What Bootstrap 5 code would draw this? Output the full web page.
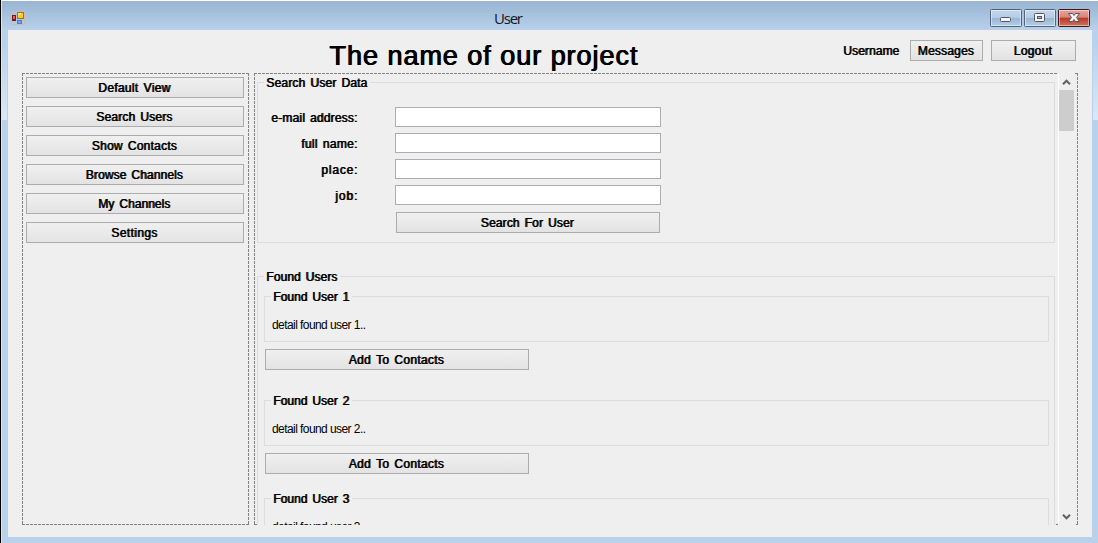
<!DOCTYPE html>
<html lang="en">
<head>
<meta charset="utf-8">
<meta name="viewport" content="width=device-width, initial-scale=1">
<title>User</title>
<link rel="stylesheet" href="https://cdn.jsdelivr.net/npm/bootstrap@5.3.0/dist/css/bootstrap.min.css">
<style>
  body { background:#b9d1ea; font:12px/14px "Liberation Sans", sans-serif; color:#000; }
  .win { width:1098px; height:543px; border-left:1px solid #000; padding:0 6px 6px 7px;
    background:
      linear-gradient(#fff,#fff) 0 0/100% 1px no-repeat,
      linear-gradient(#98b4d2,#b9d1ea) 0 1px/100% 29px no-repeat,
      linear-gradient(#b9d1ea,#b9d1ea 15%,#dce8f5) 1px 30px/5px 90px no-repeat,
      linear-gradient(#b9d1ea,#b9d1ea 15%,#dce8f5) 1092px 30px/5px 90px no-repeat,
      #b9d1ea; box-shadow:inset 1px 0 #d9e6f3; }
  .titlebar { height:30px; padding:10px 0 0 3px; }
  .caption-text { font:15px/20px "Open Sans", sans-serif; color:#111827; left:486px; top:8px; }
  .window-buttons { left:982px; top:9px; }
  .client { height:507px; background:#efefef; padding:0 14px 12px; }
  .topbar { height:43px; }
  .fb { text-shadow:.8px 0 0 #000; white-space:nowrap; word-spacing:1.5px; }
  .fit { display:inline-block; white-space:nowrap; }
  .heading-text { font-size:27px; line-height:30px; margin:11px 0 0 307px; word-spacing:0; text-shadow:.5px 0 0 #000,1px 0 0 #000; }
  .account { margin:10px 2px 0 0; }
  .user-label { margin:4px 11px 0 0; }
  .wbtn { height:21px; border:1px solid #acacac; border-radius:0; padding:1px 2px 0 0; background:linear-gradient(#f0f0f0,#e3e3e3);
    font-size:12px; line-height:18px; color:#000; }
  .wbtn .fit { line-height:18px; vertical-align:top; }
  .w-messages { width:73px; margin-right:8px; }
  .w-logout { width:85px; }
  .dash { --h:repeating-linear-gradient(90deg,#828282 0 3px,transparent 3px 4px);
          --v:repeating-linear-gradient(#828282 0 3px,transparent 3px 4px); }
  .side { width:227px; height:452px; padding:4px 5px 0 4px; gap:8px;
    background:var(--h) 0 0/100% 1px no-repeat,var(--h) 0 100%/100% 1px no-repeat,
               var(--v) 0 0/1px 100% no-repeat,var(--v) 100% 0/1px 100% no-repeat; }
  .pane { width:824px; height:452px; margin-left:5px; padding-left:3px;
    background:var(--h) 0 0/804px 1px no-repeat,var(--h) 821px 0/3px 1px no-repeat,
               var(--h) 0 100%/3px 1px no-repeat,linear-gradient(#828282,#828282) 802px 100%/2px 1px no-repeat,
               linear-gradient(#828282,#828282) 822px 100%/2px 1px no-repeat,
               var(--v) 0 0/1px 100% no-repeat,var(--v) 100% 0/1px 100% no-repeat; }
  .scrolled { width:798px; height:452px; padding-top:9px; }
  .group { border:1px solid #dcdcdc; }
  .group-title { top:-7px; left:6px; padding:0 3px 0 2px; background:#efefef; line-height:14px; height:14px; }
  .g-search { height:161px; padding:24px 0 0 10px; }
  .g-found { height:320px; margin-top:33px; padding:19px 5px 0 6px; }
  .g-user { height:46px; padding:21px 0 0 7px; }
  .field { height:26px; }
  .field-label { width:89px; padding-top:4px; margin-right:38px; }
  .wtext { width:266px; height:20px; border:1px solid #abadb3; border-radius:0; padding:0 3px; }
  .wide { width:264px; display:block; }
  .search-btn { margin:1px 0 0 128px; }
  .add-btn { margin:7px 0 30px 1px; }
  .add-btn.tight { margin-bottom:24px; }
  .vbar { width:16px; height:452px; margin-left:3px; border-left:1px solid #fff; padding:5px 0 4px; }
  .thumb { width:15px; height:41px; background:#cdcdcd; margin-top:4px; }
</style>
</head>
<body class="overflow-hidden">
<div class="win overflow-hidden">
  <header class="titlebar d-flex position-relative align-items-start">
    <svg width="14" height="15" viewBox="0 0 14 15" shape-rendering="crispEdges">
      <path d="M.5 2.500H5.500V1.500H13.500V14.500H.5Z" fill="none" stroke="#c4bdb8"/>
      <rect x="1" y="5" width="4" height="6" fill="#8a1010"/><rect x="2" y="6" width="2" height="3" fill="#e0614f"/>
      <rect x="6" y="2" width="7" height="7" fill="#a87500"/><rect x="7" y="3" width="5" height="5" fill="#ffc629"/><rect x="7" y="3" width="3" height="2" fill="#ffe18a"/>
      <rect x="6" y="10" width="5" height="4" fill="#4a7bd8"/><rect x="7" y="11" width="3" height="2" fill="#6da2f4"/>
    </svg>
    <span class="caption-text fit position-absolute" data-w="29">User</span>
    <svg class="window-buttons position-absolute" width="100" height="18" viewBox="0 0 100 18">
      <defs>
        <linearGradient id="blue" x2="0" y2="1"><stop offset="0" stop-color="#c4d8ec"/><stop offset=".48" stop-color="#b5cce4"/><stop offset=".5" stop-color="#98b5d3"/><stop offset="1" stop-color="#b6d0ea"/></linearGradient>
        <linearGradient id="red" x2="0" y2="1"><stop offset="0" stop-color="#e8a99d"/><stop offset=".46" stop-color="#d98373"/><stop offset=".5" stop-color="#b9371f"/><stop offset="1" stop-color="#d07763"/></linearGradient>
      </defs>
      <g stroke="#53657d"><rect x=".5" y=".5" width="31" height="17" rx="1" fill="url(#blue)"/><rect x="34.500" y=".5" width="31" height="17" rx="1" fill="url(#blue)"/></g>
      <rect x="68.500" y=".5" width="31" height="17" rx="1" fill="url(#red)" stroke="#431422"/>
      <g fill="none" stroke="#fff" stroke-opacity=".45"><rect x="1.500" y="1.500" width="29" height="15"/><rect x="35.500" y="1.500" width="29" height="15"/><rect x="69.500" y="1.500" width="29" height="15"/></g>
      <rect x="10.500" y="8.500" width="10" height="4" rx="1" fill="#f5f5f5" stroke="#53566a"/>
      <rect x="44.500" y="4.500" width="10" height="8" rx="1" fill="#f5f5f5" stroke="#53566a"/><rect x="47.500" y="7.500" width="4" height="2" fill="#a3bcd7" stroke="#53566a"/>
      <path d="M78.500 4.500h4l1.500 2 1.500-2h4l-3 4 3 4h-4l-1.500-2-1.500 2h-4l3-4z" fill="#f5f5f5" stroke="#53566a"/>
    </svg>
  </header>
  <main class="client">
    <div class="topbar d-flex align-items-start">
      <h1 class="heading-text fb fit fw-normal" data-w="308">The name of our project</h1>
      <div class="account d-flex ms-auto">
        <span class="user-label fb fit" data-w="56">Username</span>
        <button class="btn wbtn w-messages"><span class="fb fit" data-w="56">Messages</span></button>
        <button class="btn wbtn w-logout"><span class="fb fit" data-w="38">Logout</span></button>
      </div>
    </div>
    <div class="d-flex">
      <nav class="side dash d-flex flex-column">
        <button class="btn wbtn"><span class="fb fit" data-w="72">Default View</span></button>
        <button class="btn wbtn"><span class="fb fit" data-w="76">Search Users</span></button>
        <button class="btn wbtn"><span class="fb fit" data-w="85">Show Contacts</span></button>
        <button class="btn wbtn"><span class="fb fit" data-w="97">Browse Channels</span></button>
        <button class="btn wbtn"><span class="fb fit" data-w="72">My Channels</span></button>
        <button class="btn wbtn"><span class="fb fit" data-w="46">Settings</span></button>
      </nav>
      <section class="pane dash d-flex">
        <div class="scrolled overflow-hidden">
          <div class="group g-search position-relative">
            <div class="group-title position-absolute"><span class="fb fit" data-w="101">Search User Data</span></div>
            <div class="field d-flex"><label class="field-label text-end"><span class="fb fit" data-w="86">e-mail address:</span></label><input class="wtext" type="text"></div>
            <div class="field d-flex"><label class="field-label text-end"><span class="fb fit" data-w="56">full name:</span></label><input class="wtext" type="text"></div>
            <div class="field d-flex"><label class="field-label text-end"><span class="fb fit" data-w="36">place:</span></label><input class="wtext" type="text"></div>
            <div class="field d-flex"><label class="field-label text-end"><span class="fb fit" data-w="22">job:</span></label><input class="wtext" type="text"></div>
            <button class="btn wbtn wide search-btn"><span class="fb fit" data-w="93">Search For User</span></button>
          </div>
          <div class="group g-found position-relative">
            <div class="group-title position-absolute"><span class="fb fit" data-w="71">Found Users</span></div>
            <div class="group g-user position-relative">
              <div class="group-title position-absolute"><span class="fb fit" data-w="76">Found User 1</span></div>
              <span class="fit" data-w="94">detail found user 1..</span>
            </div>
            <button class="btn wbtn wide add-btn"><span class="fb fit" data-w="95">Add To Contacts</span></button>
            <div class="group g-user position-relative">
              <div class="group-title position-absolute"><span class="fb fit" data-w="76">Found User 2</span></div>
              <span class="fit" data-w="94">detail found user 2..</span>
            </div>
            <button class="btn wbtn wide add-btn tight"><span class="fb fit" data-w="95">Add To Contacts</span></button>
            <div class="group g-user position-relative">
              <div class="group-title position-absolute"><span class="fb fit" data-w="76">Found User 3</span></div>
              <span class="fit" data-w="94">detail found user 3..</span>
            </div>
          </div>
        </div>
        <div class="vbar d-flex flex-column align-items-center">
          <svg width="9" height="8" viewBox="0 0 9 8"><path d="M1 6.200 4.500 2.700 8 6.200" fill="none" stroke="#606060" stroke-width="2"/></svg>
          <div class="thumb"></div>
          <svg class="mt-auto" width="9" height="8" viewBox="0 0 9 8"><path d="M1 1.800 4.500 5.300 8 1.800" fill="none" stroke="#606060" stroke-width="2"/></svg>
        </div>
      </section>
    </div>
  </main>
</div>
<script src="https://cdn.jsdelivr.net/npm/bootstrap@5.3.0/dist/js/bootstrap.bundle.min.js"></script>
<script>
  // Space each label's letters so that it takes its nominal width.
  document.querySelectorAll('.fit').forEach(function (el) {
    var w = el.getBoundingClientRect().width, n = el.textContent.length;
    el.style.letterSpacing = ((+el.dataset.w - w) / (n - 1)) + 'px';
    el.style.width = el.dataset.w + 'px';
  });
</script>
</body>
</html>
